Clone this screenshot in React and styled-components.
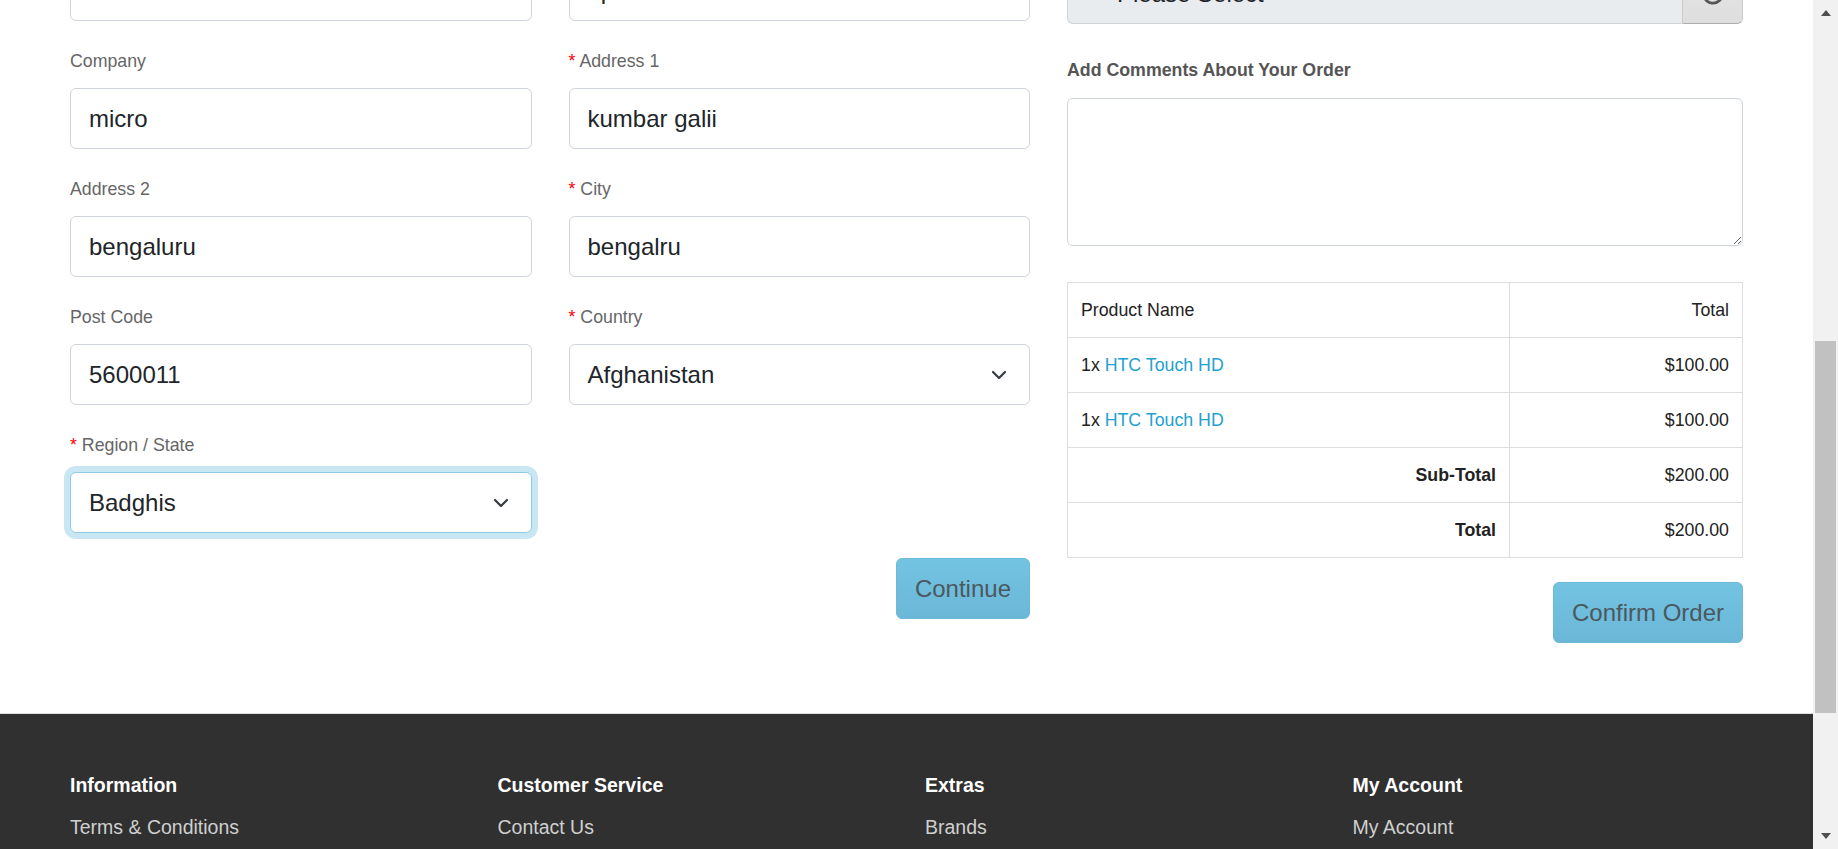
import React from 'react';
import styled, { createGlobalStyle } from 'styled-components';

const GlobalStyle = createGlobalStyle`
  html, body {
    margin: 0;
    padding: 0;
    background: #fff;
  }
  body {
    font-family: 'Liberation Sans', Arial, sans-serif;
    color: #212529;
    overflow: hidden;
  }
  * {
    box-sizing: border-box;
  }
`;

const Page = styled.div`
  display: flex;
  height: 849px;
  overflow: hidden;
`;

const Main = styled.div`
  flex: 1;
  min-width: 0;
  overflow: hidden;
`;

// the page is scrolled: the top of the checkout sits above the window
const Content = styled.div`
  margin-top: -80px;
  padding: 0 70px 70px;
  display: grid;
  grid-template-columns: 960px 1fr;
  column-gap: 37px;
  align-items: start;
`;

const FormGrid = styled.div`
  display: grid;
  grid-template-columns: 1fr 1fr;
  column-gap: 37px;
`;

const FormGroup = styled.div`
  margin-bottom: ${p => p.$mb ?? 27}px;
  margin-top: ${p => p.$mt ?? 0}px;
`;

const Label = styled.label`
  display: block;
  font-size: 17.75px;
  line-height: 27px;
  color: #666;
  margin-bottom: ${p => p.$mb ?? 13}px;
  font-weight: ${p => (p.$bold ? 700 : 400)};
  ${p => p.$bold && 'color: #555;'}

  &::before {
    content: ${p => (p.$required ? '"* "' : 'none')};
    color: #f00;
  }
`;

const Input = styled.input`
  display: block;
  width: 100%;
  height: 61px;
  padding: 0 18px;
  font-family: inherit;
  font-size: 24px;
  color: #212529;
  background: #fff;
  border: 1px solid #ced4da;
  border-radius: 6px;
  outline: none;
`;

const SelectBox = styled.div`
  display: flex;
  align-items: center;
  justify-content: space-between;
  height: 61px;
  padding: 0 22px 0 18px;
  font-size: 24px;
  color: #212529;
  background: #fff;
  border: 1px solid ${p => (p.$focused ? '#8fcbe4' : '#ced4da')};
  border-radius: 6px;
  box-shadow: ${p => (p.$focused ? '0 0 0 6px rgba(35, 161, 209, 0.25)' : 'none')};
`;

const Chevron = () => (
  <svg width="16" height="10" viewBox="0 0 16 10">
    <path d="M2 2l6 6 6-6" fill="none" stroke="#343a40" strokeWidth="2.2" strokeLinecap="round" strokeLinejoin="round" />
  </svg>
);

const ButtonRow = styled.div`
  display: flex;
  justify-content: flex-end;
  margin-top: ${p => p.$mt ?? 0}px;
`;

const Button = styled.button`
  height: 61px;
  padding: 0 18px;
  font-family: inherit;
  font-size: 24px;
  color: #4b5860;
  background: linear-gradient(#73c3e2, #6bb7d7);
  border: 1px solid #6cb9d8;
  border-radius: 6px;
`;

const InputGroup = styled.div`
  display: flex;
  height: 61px;
`;

const GroupSelect = styled.div`
  flex: 1;
  display: flex;
  align-items: center;
  padding-left: 49px;
  font-size: 24px;
  color: #212529;
  background: #e9ecef;
  border: 1px solid #ced4da;
  border-right: none;
  border-radius: 6px 0 0 6px;
`;

const GroupAddon = styled.div`
  width: 61px;
  display: flex;
  align-items: center;
  justify-content: center;
  background: linear-gradient(#e6e6e6, #dedede);
  border: 1px solid #cacaca;
  border-bottom-color: #adadad;
  border-radius: 0 6px 6px 0;
`;

const RefreshIcon = () => (
  <svg width="26" height="26" viewBox="0 0 24 24" fill="none" stroke="#555" strokeWidth="2.6" strokeLinecap="round">
    <path d="M4 9A8.5 8.5 0 1 0 9 4" />
    <path d="M3.5 3.5v6h6" />
  </svg>
);

const TextArea = styled.textarea`
  display: block;
  width: 100%;
  height: 148px;
  padding: 10px 18px;
  font-family: inherit;
  font-size: 24px;
  border: 1px solid #ced4da;
  border-radius: 6px;
  resize: vertical;
  outline: none;
`;

const Table = styled.table`
  width: 100%;
  margin-top: 36px;
  border-collapse: collapse;
  font-size: 17.75px;
  color: #222;
`;

const Cell = styled.td`
  height: 55px;
  padding: 0 13px;
  border: 1px solid #ddd;
  text-align: ${p => (p.$right ? 'right' : 'left')};
  font-weight: ${p => (p.$bold ? 700 : 400)};
`;

const ProductLink = styled.a`
  color: #23a1d1;
  text-decoration: none;
`;

const Footer = styled.footer`
  background: #303030;
  border-top: 1px solid #ddd;
  padding: 59px 70px 40px;
  color: #e2e2e2;
`;

const FooterGrid = styled.div`
  display: grid;
  grid-template-columns: repeat(4, 1fr);
  column-gap: 37px;
`;

const FooterHeading = styled.h5`
  margin: 0 0 18px;
  font-size: 19.5px;
  line-height: 24px;
  font-weight: 700;
  color: #fff;
`;

const FooterList = styled.ul`
  list-style: none;
  margin: 0;
  padding: 0;
`;

const FooterLink = styled.li`
  font-size: 19.5px;
  line-height: 24px;
  margin-bottom: 8px;
  color: #cfcfcf;
`;

const Scrollbar = styled.div`
  width: 25px;
  flex: none;
  display: flex;
  flex-direction: column;
  background: #f1f1f1;
`;

const ScrollArrow = styled.div`
  height: ${p => p.$h}px;
  display: flex;
  align-items: center;
  justify-content: center;

  &::after {
    content: '';
    width: 0;
    height: 0;
    border-left: 5.5px solid transparent;
    border-right: 5.5px solid transparent;
    ${p => (p.$down ? 'border-top' : 'border-bottom')}: 6px solid #505050;
  }
`;

const Track = styled.div`
  flex: 1;
  padding: 316px 2px 0;
`;

const Thumb = styled.div`
  height: 372px;
  background: #c1c1c1;
`;

const leftRows = [
  [{ label: 'First Name', value: 'ramesh', required: true }, { label: 'Last Name', value: 'upreti', required: true }],
  [{ label: 'Company', value: 'micro' }, { label: 'Address 1', value: 'kumbar galii', required: true }],
  [{ label: 'Address 2', value: 'bengaluru' }, { label: 'City', value: 'bengalru', required: true }],
];

const footerCols = [
  { title: 'Information', links: ['Terms & Conditions', 'Delivery Information', 'About Us', 'Privacy Policy'] },
  { title: 'Customer Service', links: ['Contact Us', 'Returns', 'Site Map'] },
  { title: 'Extras', links: ['Brands', 'Gift Certificates', 'Affiliate', 'Specials'] },
  { title: 'My Account', links: ['My Account', 'Order History', 'Wish List', 'Newsletter'] },
];

const products = [
  { qty: 1, name: 'HTC Touch HD', total: '$100.00' },
  { qty: 1, name: 'HTC Touch HD', total: '$100.00' },
];

export default function App() {
  return (
    <>
      <GlobalStyle />
      <Page>
        <Main>
          <Content>
            <div>
              <FormGrid>
                {leftRows.flat().map(f => (
                  <FormGroup key={f.label}>
                    <Label $required={f.required}>{f.label}</Label>
                    <Input defaultValue={f.value} />
                  </FormGroup>
                ))}
                <FormGroup>
                  <Label>Post Code</Label>
                  <Input defaultValue="5600011" />
                </FormGroup>
                <FormGroup>
                  <Label $required>Country</Label>
                  <SelectBox>
                    <span>Afghanistan</span>
                    <Chevron />
                  </SelectBox>
                </FormGroup>
                <FormGroup $mb={25}>
                  <Label $required>Region / State</Label>
                  <SelectBox $focused>
                    <span>Badghis</span>
                    <Chevron />
                  </SelectBox>
                </FormGroup>
              </FormGrid>
              <ButtonRow>
                <Button>Continue</Button>
              </ButtonRow>
            </div>

            <div>
              <FormGroup $mt={2} $mb={33}>
                <Label $required $mb={14}>Shipping Method</Label>
                <InputGroup>
                  <GroupSelect>Please Select</GroupSelect>
                  <GroupAddon>
                    <RefreshIcon />
                  </GroupAddon>
                </InputGroup>
              </FormGroup>
              <Label $bold $mb={14}>Add Comments About Your Order</Label>
              <TextArea />
              <Table>
                <colgroup>
                  <col style={{ width: 442 }} />
                  <col />
                </colgroup>
                <tbody>
                  <tr>
                    <Cell>Product Name</Cell>
                    <Cell $right>Total</Cell>
                  </tr>
                  {products.map((p, i) => (
                    <tr key={i}>
                      <Cell>
                        {p.qty}x <ProductLink href="#">{p.name}</ProductLink>
                      </Cell>
                      <Cell $right>{p.total}</Cell>
                    </tr>
                  ))}
                  <tr>
                    <Cell $right $bold>Sub-Total</Cell>
                    <Cell $right>$200.00</Cell>
                  </tr>
                  <tr>
                    <Cell $right $bold>Total</Cell>
                    <Cell $right>$200.00</Cell>
                  </tr>
                </tbody>
              </Table>
              <ButtonRow $mt={24}>
                <Button>Confirm Order</Button>
              </ButtonRow>
            </div>
          </Content>

          <Footer>
            <FooterGrid>
              {footerCols.map(col => (
                <div key={col.title}>
                  <FooterHeading>{col.title}</FooterHeading>
                  <FooterList>
                    {col.links.map(l => (
                      <FooterLink key={l}>{l}</FooterLink>
                    ))}
                  </FooterList>
                </div>
              ))}
            </FooterGrid>
          </Footer>
        </Main>
        <Scrollbar>
          <ScrollArrow $h={25} />
          <Track>
            <Thumb />
          </Track>
          <ScrollArrow $h={26} $down />
        </Scrollbar>
      </Page>
    </>
  );
}
